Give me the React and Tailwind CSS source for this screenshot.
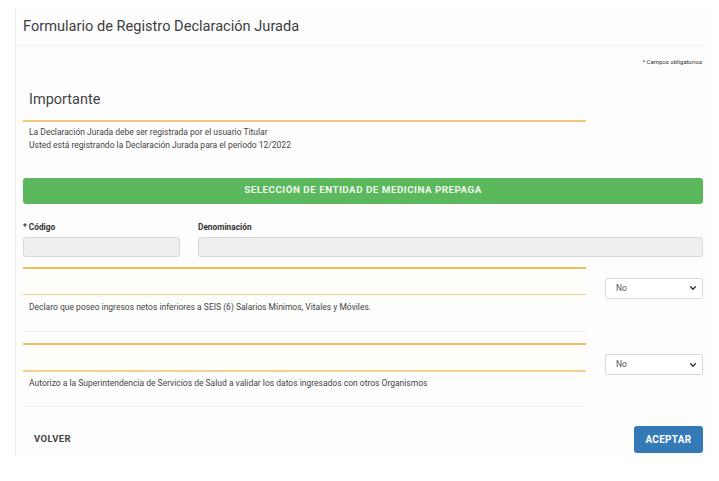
import React from "react";

function Chevron() {
  return (
    <svg width="8" height="8" viewBox="0 0 10 10" className="text-[#333]">
      <path d="M2 3.5 L5 6.5 L8 3.5" fill="none" stroke="currentColor" strokeWidth="1.7" strokeLinecap="round" strokeLinejoin="round" />
    </svg>
  );
}

function Select() {
  return (
    <div className="w-[98px] h-[21px] border border-[#d9d9d9] rounded-[2px] bg-white flex items-center justify-between pl-[10px] pr-[5px] text-[8.5px] text-[#555]">
      <span>No</span>
      <Chevron />
    </div>
  );
}

function DeclRow({ text, tall }) {
  return (
    <div className="flex">
      <div className="w-[563px] flex flex-col">
        <div className="h-[2px] bg-[#f0bd5e]" />
        <div className="h-[25px] bg-[#fffefa]" />
        <div className="h-[1.5px] bg-[#f3cf8c]" />
        <div className={tall ? "h-[25px] flex items-center pl-[6px] text-[8.5px] text-[#444]" : "h-[24px] flex items-center pl-[6px] text-[8.5px] text-[#444]"}>{text}</div>
        <div className={tall ? "h-[11px]" : "h-[10px]"} />
        <div className="h-[1px] bg-[#eeeeee]" />
      </div>
      <div className="ml-[19px] pt-[11px]">
        <Select />
      </div>
    </div>
  );
}

export default function App() {
  return (
    <div className="w-[719px] h-[481px] bg-white overflow-hidden" style={{ fontFamily: "Roboto, 'Liberation Sans', sans-serif" }}>
      <div className="ml-[15px] mt-[8px] h-[448px] w-[696px] border-l border-[#ececec] bg-[#fdfdfd] pl-[7px] pr-[8px]">
        <div className="h-[37px] flex items-center text-[14.6px] text-[#3d3d3d] pt-[1px]">Formulario de Registro Declaración Jurada</div>
        <div className="h-[1px] bg-[#f4f4f4] -ml-[7px]" />
        <div className="flex justify-end pt-[12px] pr-[1px] text-[6px] text-[#333] leading-[8px]">* Campos obligatorios</div>
        <div className="w-[563px]">
          <div className="pl-[6px] pt-[25px] h-[54px] text-[14.5px] text-[#444] leading-[18px]">Importante</div>
          <div className="h-[1.5px] bg-[#f3c77c]" />
          <div className="pl-[6px] pt-[4px] text-[8.5px] text-[#444] leading-[13px]">
            <div>La Declaración Jurada debe ser registrada por el usuario Titular</div>
            <div>Usted está registrando la Declaración Jurada para el período 12/2022</div>
          </div>
        </div>
        <div className="mt-[26px] h-[26px] rounded-[3px] bg-[#5cb85c] flex items-center justify-center text-[9.8px] font-bold tracking-[0.5px] text-[#eef8ee]">
          SELECCIÓN DE ENTIDAD DE MEDICINA PREPAGA
        </div>
        <div className="mt-[18px] flex gap-[18px]">
          <div className="w-[157px]">
            <div className="text-[8.3px] font-bold text-[#333] leading-[10px]">* Código</div>
            <div className="mt-[5px] h-[20px] rounded-[3px] bg-[#efefef] border border-[#d8d8d8]" />
          </div>
          <div className="flex-1">
            <div className="text-[8.3px] font-bold text-[#333] leading-[10px]">Denominación</div>
            <div className="mt-[5px] h-[20px] rounded-[3px] bg-[#efefef] border border-[#d8d8d8]" />
          </div>
        </div>
        <div className="mt-[10px]">
          <DeclRow tall text="Declaro que poseo ingresos netos inferiores a SEIS (6) Salarios Mínimos, Vitales y Móviles." />
        </div>
        <div className="mt-[11px]">
          <DeclRow text="Autorizo a la Superintendencia de Servicios de Salud a validar los datos ingresados con otros Organismos" />
        </div>
        <div className="mt-[19px] flex items-center justify-between">
          <div className="pl-[11px] text-[9.5px] font-bold tracking-[0.4px] text-[#444]">VOLVER</div>
          <div className="w-[69px] h-[27px] rounded-[3px] bg-[#337ab7] flex items-center justify-center text-[10px] font-bold tracking-[0.3px] text-white">ACEPTAR</div>
        </div>
      </div>
    </div>
  );
}
